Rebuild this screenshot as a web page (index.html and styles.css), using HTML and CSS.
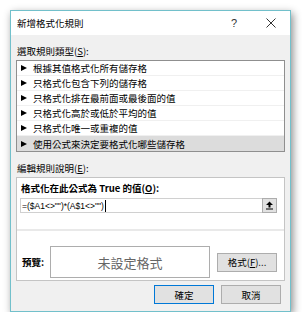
FILE: index.html
```html
<!DOCTYPE html>
<html lang="zh-Hant">
  <head>
    <meta charset="UTF-8" />
    <title>新增格式化規則</title>
    <link rel="stylesheet" href="styles.css">
  </head>
  <body>
    <div class="dialog">
      <div class="titlebar">
        <span class="title">新增格式化規則</span>
        <span class="help">?</span>
        <span class="close">
          <svg width="10" height="10" viewBox="0 0 10 10">
            <path d="M0.5 0.5 L9.5 9.5 M9.5 0.5 L0.5 9.5" stroke="#333" stroke-width="1" fill="none" />
          </svg>
        </span>
      </div>

      <div class="content">
        <div class="label">選取規則類型(<u>S</u>):</div>
        <ul class="rules">
          <li><i class="arrow"></i>根據其值格式化所有儲存格</li>
          <li><i class="arrow"></i>只格式化包含下列的儲存格</li>
          <li><i class="arrow"></i>只格式化排在最前面或最後面的值</li>
          <li><i class="arrow"></i>只格式化高於或低於平均的值</li>
          <li><i class="arrow"></i>只格式化唯一或重複的值</li>
          <li class="selected"><i class="arrow"></i>使用公式來決定要格式化哪些儲存格</li>
        </ul>

        <div class="label">編輯規則說明(<u>E</u>):</div>
        <div class="desc">
          <div class="formula">
            <div class="formula-label">格式化在此公式為 True 的值(<u>O</u>):</div>
            <div class="formula-input">
              <span class="formula-text">=($A1&lt;&gt;"")*(A$1&lt;&gt;"")<span class="caret"></span></span>
              <span class="collapse">
                <svg width="9" height="9" viewBox="0 0 9 9">
                  <path d="M4.5 0.5 L8 4 L5.5 4 L5.5 6.5 L3.5 6.5 L3.5 4 L1 4 Z" fill="#000" />
                  <rect x="1" y="7.5" width="7" height="1" fill="#000" />
                </svg>
              </span>
            </div>
          </div>
          <div class="preview">
            <span class="preview-label">預覽:</span>
            <div class="preview-box">未設定格式</div>
            <button type="button" class="btn format-btn">格式(<u>F</u>)...</button>
          </div>
        </div>

        <div class="actions">
          <button type="button" class="btn default">確定</button>
          <button type="button" class="btn">取消</button>
        </div>
      </div>
    </div>
  </body>
</html>
```

FILE: styles.css
```css
body {
  margin: 0;
  padding: 0;
  background-color: #fff;
  font-family: "Noto Sans CJK TC", "Liberation Sans", sans-serif;
  font-size: 9.5px;
  color: #000;
}

.dialog {
  margin: 10px 0 0 10px;
  width: 279px;
  border: 1px solid #72c0cb;
  background-color: #f0f0f0;
  box-shadow: 2px 3px 8px rgba(0, 0, 0, 0.45);
}

.titlebar {
  display: flex;
  align-items: center;
  height: 24px;
  background-color: #fff;
}

.title {
  flex: 1;
  padding-left: 6px;
  line-height: 24px;
}

.help {
  width: 36px;
  text-align: center;
  font-family: "Liberation Sans", sans-serif;
  font-size: 11px;
  color: #333;
}

.close {
  width: 38px;
  display: flex;
  justify-content: center;
  align-items: center;
}

.content {
  padding: 0 5px 7px 5px;
}

.label {
  margin-top: 9px;
  margin-bottom: 2px;
  padding-left: 1px;
  line-height: 14px;
}

.rules {
  list-style: none;
  margin: 0;
  padding: 0;
  border: 1px solid #8f8f8f;
  background-color: #fff;
}

.rules li {
  display: flex;
  align-items: center;
  height: 15px;
  padding-left: 4px;
  box-sizing: border-box;
  border-bottom: 1px solid #f0f0f0;
}

.rules li:last-child {
  border-bottom: none;
}

.rules li.selected {
  background-color: #dcdcdc;
}

.arrow {
  display: inline-block;
  width: 0;
  height: 0;
  border-left: 6px solid #000;
  border-top: 3.5px solid transparent;
  border-bottom: 3.5px solid transparent;
  margin-right: 6px;
}

.desc {
  border: 1px solid #c4c4c4;
  background-color: #fff;
}

.formula {
  padding: 3px 7px 16px 3px;
  border-bottom: 2px solid #e9e9e9;
}

.formula-label {
  padding-left: 1px;
  line-height: 14px;
  font-weight: bold;
  margin-bottom: 3px;
}

.formula-input {
  display: flex;
  align-items: center;
  height: 15px;
  box-sizing: border-box;
  border: 1px solid #d0d0d0;
}

.formula-text {
  flex: 1;
  padding-left: 1px;
  font-family: "Liberation Sans", sans-serif;
  font-size: 8.5px;
  display: flex;
  align-items: center;
}

.caret {
  display: inline-block;
  width: 1px;
  height: 12px;
  background-color: #000;
  margin-left: 1px;
}

.collapse {
  width: 15px;
  height: 15px;
  margin: -1px -1px -1px 0;
  box-sizing: border-box;
  border: 1px solid #adadad;
  background-color: #e1e1e1;
  display: flex;
  justify-content: center;
  align-items: center;
}

.preview {
  display: flex;
  align-items: center;
  padding: 15px 0 2px 5px;
}

.preview-label {
  width: 28px;
  font-weight: bold;
}

.preview-box {
  width: 160px;
  height: 32px;
  box-sizing: border-box;
  border: 1px solid #adadad;
  display: flex;
  justify-content: center;
  align-items: center;
  font-size: 13px;
  color: #666;
  margin-right: 7px;
}

.btn {
  width: 60px;
  height: 19px;
  padding: 0;
  border: 1px solid #adadad;
  background-color: #e1e1e1;
  font-family: "Noto Sans CJK TC", "Liberation Sans", sans-serif;
  font-size: 9.5px;
  color: #000;
}

.btn.default {
  border-color: #0078d7;
}

.actions {
  display: flex;
  justify-content: flex-end;
  gap: 7px;
  margin-top: 4px;
  padding-right: 4px;
}
```
